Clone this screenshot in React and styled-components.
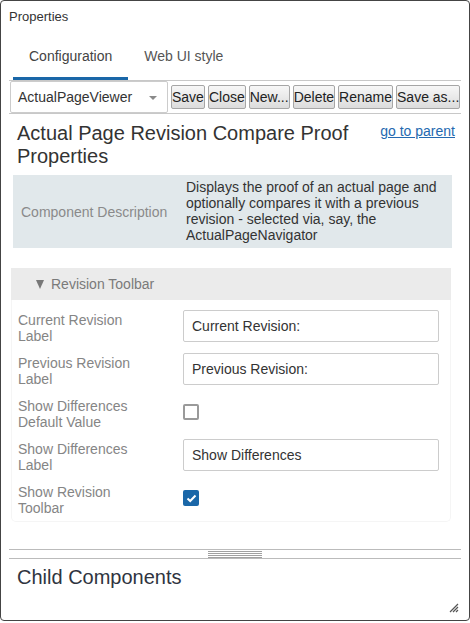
import React from "react";
import styled, { createGlobalStyle } from "styled-components";

const Global = createGlobalStyle`
  html, body { margin: 0; padding: 0; background: #fff; }
  body { font-family: "Liberation Sans", Arial, sans-serif; color: #333; }
  * { box-sizing: border-box; }
`;

const Window = styled.div`
  position: relative;
  width: 470px;
  height: 621px;
  border: 1px solid #444;
  border-radius: 4px;
  display: flex;
  flex-direction: column;
  overflow: hidden;
  background: #fff;
`;

const Upper = styled.div`
  flex: 1;
  display: flex;
  flex-direction: column;
  overflow: hidden;
`;

const Header = styled.div`
  padding: 8px 8px 0;
  font-size: 13px;
  line-height: 16px;
  height: 24px;
  color: #333;
`;

const Tabs = styled.div`
  display: flex;
  padding-left: 12px;
`;

const Tab = styled.div`
  padding: 23px 16px 13px;
  font-size: 14px;
  line-height: 16px;
  color: ${(p) => (p.$active ? "#444" : "#555")};
  border-bottom: 3px solid ${(p) => (p.$active ? "#1a67a8" : "transparent")};
`;

const Toolbar = styled.div`
  display: flex;
  align-items: center;
  margin: 0 8px 0 8px;
  height: 34px;
  border-top: 1px solid #c8c8c8;
  border-bottom: 1px solid #c8c8c8;
`;

const Select = styled.div`
  position: relative;
  width: 158px;
  height: 32px;
  margin-left: 1px;
  border: 1px solid #ccc;
  border-radius: 2px;
  padding-left: 7px;
  display: flex;
  align-items: center;
  font-size: 14px;
  color: #333;
`;

const Caret = styled.span`
  position: absolute;
  right: 10px;
  top: 14px;
  width: 0;
  height: 0;
  border-left: 4.5px solid transparent;
  border-right: 4.5px solid transparent;
  border-top: 4px solid #8a8a8a;
`;

const Button = styled.button`
  margin-left: 3px;
  height: 24px;
  padding: 0;
  border: 1px solid #a6a6a6;
  border-radius: 2px;
  background: linear-gradient(#f7f7f7, #dcdcdc);
  font-family: "Liberation Sans", Arial, sans-serif;
  font-size: 14px;
  color: #222;
  white-space: nowrap;
`;

const Scroll = styled.div`
  flex: 1;
  overflow: hidden;
`;

const TitleRow = styled.div`
  display: flex;
  align-items: flex-start;
  justify-content: space-between;
  padding: 8px 14px 0 16px;
`;

const Title = styled.h1`
  margin: 0;
  font-weight: normal;
  font-size: 20px;
  line-height: 23px;
  color: #333;
  max-width: 350px;
`;

const Link = styled.a`
  margin-top: 1px;
  font-size: 14px;
  line-height: 16px;
  color: #2469b0;
  text-decoration: underline;
  white-space: nowrap;
`;

const Desc = styled.div`
  display: flex;
  align-items: stretch;
  margin: 7px 17px 0 12px;
  background: #e1e8eb;
  font-size: 14px;
  line-height: 16px;
`;

const DescLabel = styled.div`
  width: 173px;
  padding-left: 8px;
  display: flex;
  align-items: center;
  color: #8a8a8a;
`;

const DescText = styled.div`
  flex: 1;
  padding: 4px 8px 5px 0;
  color: #333;
`;

const Section = styled.div`
  margin: 20px 18px 0 10px;
`;

const SectionHead = styled.div`
  height: 32px;
  background: #ebebeb;
  display: flex;
  align-items: center;
  padding-left: 25px;
  font-size: 14px;
  color: #7a7a7a;
`;

const Arrow = styled.span`
  width: 0;
  height: 0;
  border-left: 4.5px solid transparent;
  border-right: 4.5px solid transparent;
  border-top: 9px solid #777;
  margin: 1px 7px 0 0;
`;

const SectionBody = styled.div`
  border: 1px solid #f5f5f5;
  border-top: none;
  border-radius: 0 0 5px 5px;
  padding: 10px 11px 5px 6px;
  display: flex;
  flex-direction: column;
  gap: 9px;
`;

const Row = styled.div`
  display: flex;
  align-items: flex-start;
  min-height: 34px;
`;

const Label = styled.div`
  width: 165px;
  padding-top: 2px;
  padding-right: 30px;
  font-size: 14px;
  line-height: 16px;
  color: #858585;
`;

const Input = styled.div`
  flex: 1;
  height: 32px;
  border: 1px solid #ccc;
  border-radius: 2px;
  padding-left: 8px;
  display: flex;
  align-items: center;
  font-size: 14px;
  color: #333;
`;

const Check = styled.div`
  margin-top: 8px;
  width: 16px;
  height: 16px;
  border-radius: 2px;
  border: ${(p) => (p.$checked ? "none" : "2px solid #9a9a9a")};
  background: ${(p) => (p.$checked ? "#1a67a8" : "#fff")};
  display: flex;
  align-items: center;
  justify-content: center;
`;

const Splitter = styled.div`
  margin: 0 8px;
  height: 10px;
  border-top: 1px solid #bbb;
  border-bottom: 1px solid #bbb;
  display: flex;
  justify-content: center;
  padding-top: 1px;
`;

const Grip = styled.div`
  width: 54px;
  height: 7px;
  background: repeating-linear-gradient(
    to bottom,
    #a0a0a0 0px,
    #a0a0a0 1px,
    transparent 1px,
    transparent 2px
  );
`;

const Lower = styled.div`
  height: 61px;
  padding: 7px 16px 0;
`;

const Sub = styled.h2`
  margin: 0;
  font-weight: normal;
  font-size: 20px;
  line-height: 23px;
  color: #2f3440;
`;

const Resize = styled.svg`
  position: absolute;
  right: 10px;
  bottom: 7px;
`;

const fields = [
  { label: "Current Revision Label", value: "Current Revision:" },
  { label: "Previous Revision Label", value: "Previous Revision:" },
  { label: "Show Differences Default Value", check: false },
  { label: "Show Differences Label", value: "Show Differences" },
  { label: "Show Revision Toolbar", check: true },
];

export default function App() {
  return (
    <>
      <Global />
      <Window>
        <Upper>
          <Header>Properties</Header>
          <Tabs>
            <Tab $active>Configuration</Tab>
            <Tab>Web UI style</Tab>
          </Tabs>
          <Toolbar>
            <Select>
              ActualPageViewer
              <Caret />
            </Select>
            {["Save", "Close", "New...", "Delete", "Rename", "Save as..."].map((b) => (
              <Button key={b}>{b}</Button>
            ))}
          </Toolbar>
          <Scroll>
            <TitleRow>
              <Title>Actual Page Revision Compare Proof Properties</Title>
              <Link href="#">go to parent</Link>
            </TitleRow>
            <Desc>
              <DescLabel>Component Description</DescLabel>
              <DescText>
                Displays the proof of an actual page and optionally compares it with a previous
                revision - selected via, say, the ActualPageNavigator
              </DescText>
            </Desc>
            <Section>
              <SectionHead>
                <Arrow />
                Revision Toolbar
              </SectionHead>
              <SectionBody>
                {fields.map((f) => (
                  <Row key={f.label}>
                    <Label>{f.label}</Label>
                    {f.value !== undefined ? (
                      <Input>{f.value}</Input>
                    ) : (
                      <Check $checked={f.check}>
                        {f.check && (
                          <svg width="11" height="9" viewBox="0 0 11 9">
                            <path d="M1.5 4.5 L4.2 7 L9.5 1.5" fill="none" stroke="#fff" strokeWidth="2" />
                          </svg>
                        )}
                      </Check>
                    )}
                  </Row>
                ))}
              </SectionBody>
            </Section>
          </Scroll>
        </Upper>
        <Splitter>
          <Grip />
        </Splitter>
        <Lower>
          <Sub>Child Components</Sub>
        </Lower>
        <Resize width="10" height="10" viewBox="0 0 10 10">
          <path d="M1 9 L9 1 M4 9 L9 4 M7 9 L9 7" stroke="#555" strokeWidth="1.2" />
        </Resize>
      </Window>
    </>
  );
}
